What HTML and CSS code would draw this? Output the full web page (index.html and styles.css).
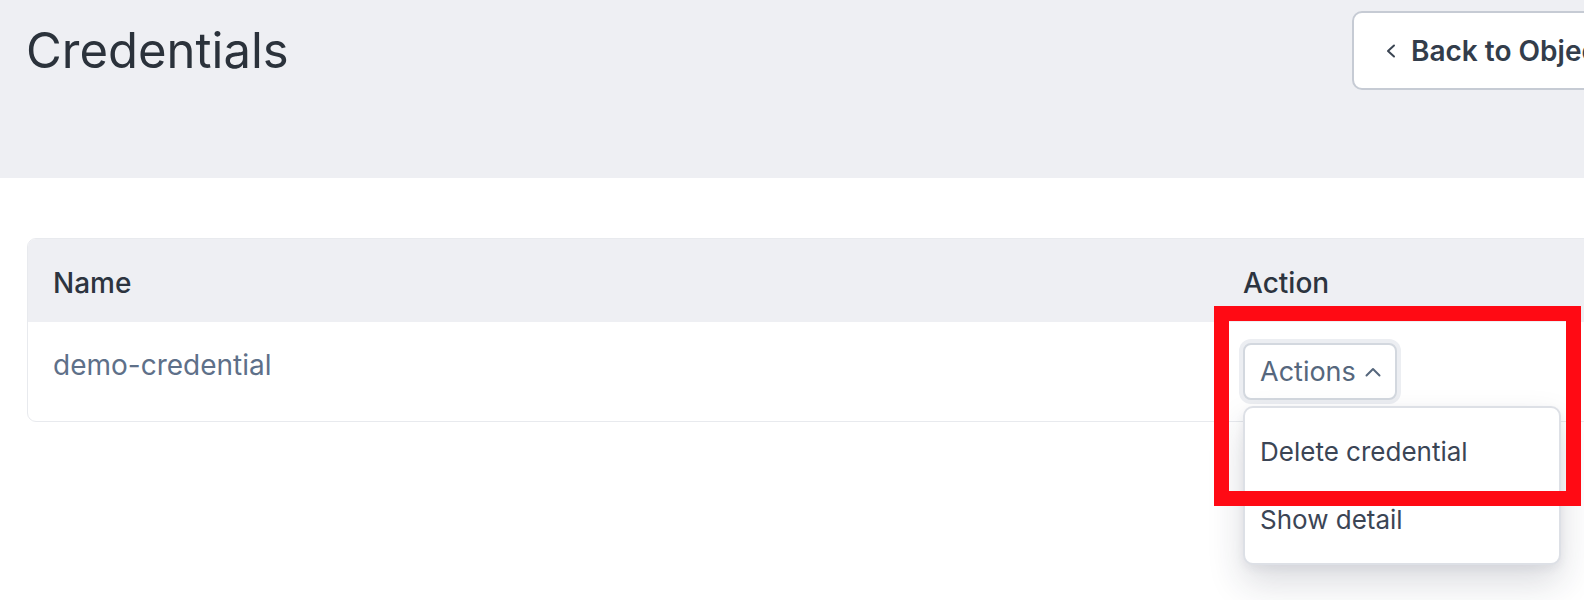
FILE: index.html
```html
<!DOCTYPE html>
<html lang="en">
<head>
<meta charset="utf-8">
<title>Credentials</title>
<link rel="stylesheet" href="styles.css">
</head>
<body>
<div class="page">
  <header class="topbar">
    <h1 class="title">Credentials</h1>
    <button class="back-btn" type="button">
      <svg class="back-icon" width="12" height="14" viewBox="0 0 12 14" aria-hidden="true"><path d="M9 1.5 L3 7 L9 12.5" fill="none" stroke="currentColor" stroke-width="2" stroke-linecap="round" stroke-linejoin="round"/></svg>
      <span>Back to Object Storage</span>
    </button>
  </header>

  <main class="content">
    <div class="table-card">
      <div class="row head-row">
        <div class="cell">Name</div>
        <div class="cell">Action</div>
      </div>
      <div class="row body-row">
        <div class="cell name-cell"><a class="cred-link" href="#">demo-credential</a></div>
        <div class="cell action-cell">
          <div class="dropdown">
            <button class="actions-btn" type="button">
              <span>Actions</span>
              <svg class="up-icon" width="16" height="10" viewBox="0 0 16 10" aria-hidden="true"><path d="M1.5 8.5 L8 2 L14.5 8.5" fill="none" stroke="currentColor" stroke-width="2" stroke-linecap="round" stroke-linejoin="round"/></svg>
            </button>
            <div class="menu">
              <div class="menu-item">Delete credential</div>
              <div class="menu-item">Show detail</div>
            </div>
          </div>
        </div>
      </div>
    </div>
  </main>

  <div class="annotation"></div>
</div>
</body>
</html>
```

FILE: styles.css
```css
html, body {
  margin: 0;
  padding: 0;
  overflow: hidden;
  background: #ffffff;
}

body {
  font-family: Inter, "Noto Sans", "Liberation Sans", sans-serif;
  color: #2c333d;
}

.page {
  position: relative;
  width: 1800px;
  min-height: 600px;
}

.topbar {
  display: grid;
  grid-template-columns: 1326px auto;
  align-items: start;
  height: 178px;
  box-sizing: border-box;
  padding: 11px 28px 0 26px;
  background: #eeeff3;
}

.title {
  margin: 11px 0 0 0;
  font-size: 49px;
  line-height: 58px;
  font-weight: 400;
  color: #2b323b;
}

.back-btn {
  display: flex;
  align-items: center;
  gap: 14px;
  height: 79px;
  box-sizing: border-box;
  padding: 0 32px 0 31px;
  border: 2px solid #c6cbd4;
  border-radius: 10px;
  background: #ffffff;
  font-family: inherit;
  font-size: 28px;
  line-height: 34px;
  font-weight: 600;
  color: #333d4b;
  white-space: nowrap;
}

.back-icon {
  display: block;
  color: #3a4452;
}

.content {
  padding: 60px 28px 0 27px;
}

.table-card {
  border: 1px solid #e8eaee;
  border-radius: 9px;
  width: 1745px;
  box-sizing: border-box;
}

.row {
  display: grid;
  grid-template-columns: 1190px 1fr;
  padding: 0 25px;
}

.head-row {
  background: #eeeff3;
  border-radius: 8px 8px 0 0;
  padding-top: 27px;
  padding-bottom: 22px;
  font-size: 28px;
  line-height: 34px;
  font-weight: 500;
  color: #2c343f;
}

.body-row {
  height: 99px;
  box-sizing: border-box;
  align-items: start;
}

.name-cell {
  padding-top: 26px;
  font-size: 28px;
  line-height: 34px;
}

.cred-link {
  color: #5e7089;
  text-decoration: none;
}

.action-cell {
  padding-top: 21px;
}

.dropdown {
  position: relative;
  width: max-content;
}

.actions-btn {
  display: flex;
  align-items: center;
  gap: 9px;
  height: 57px;
  box-sizing: border-box;
  padding: 0 14px 0 15px;
  border: 2px solid #d3d8df;
  border-radius: 8px;
  background: #ffffff;
  box-shadow: 0 0 0 4px #eceef2;
  font-family: inherit;
  font-size: 27px;
  line-height: 34px;
  font-weight: 400;
  color: #56677d;
}

.up-icon {
  display: block;
  color: #56677d;
}

.menu {
  position: absolute;
  top: 63px;
  left: 0;
  width: 318px;
  box-sizing: border-box;
  padding: 10px 0 9px 0;
  background: #ffffff;
  border: 2px solid #dde0e6;
  border-radius: 10px;
  box-shadow: 0 18px 36px rgba(30, 40, 60, 0.16), 0 4px 10px rgba(30, 40, 60, 0.06);
  z-index: 2;
}

.menu-item {
  height: 68px;
  padding: 0 15px;
  display: flex;
  align-items: center;
  font-size: 26px;
  line-height: 34px;
  color: #3b4555;
}

.annotation {
  position: absolute;
  left: 1214px;
  top: 306px;
  width: 367px;
  height: 200px;
  box-sizing: border-box;
  border: 15px solid #ff0a14;
  z-index: 3;
}
```
